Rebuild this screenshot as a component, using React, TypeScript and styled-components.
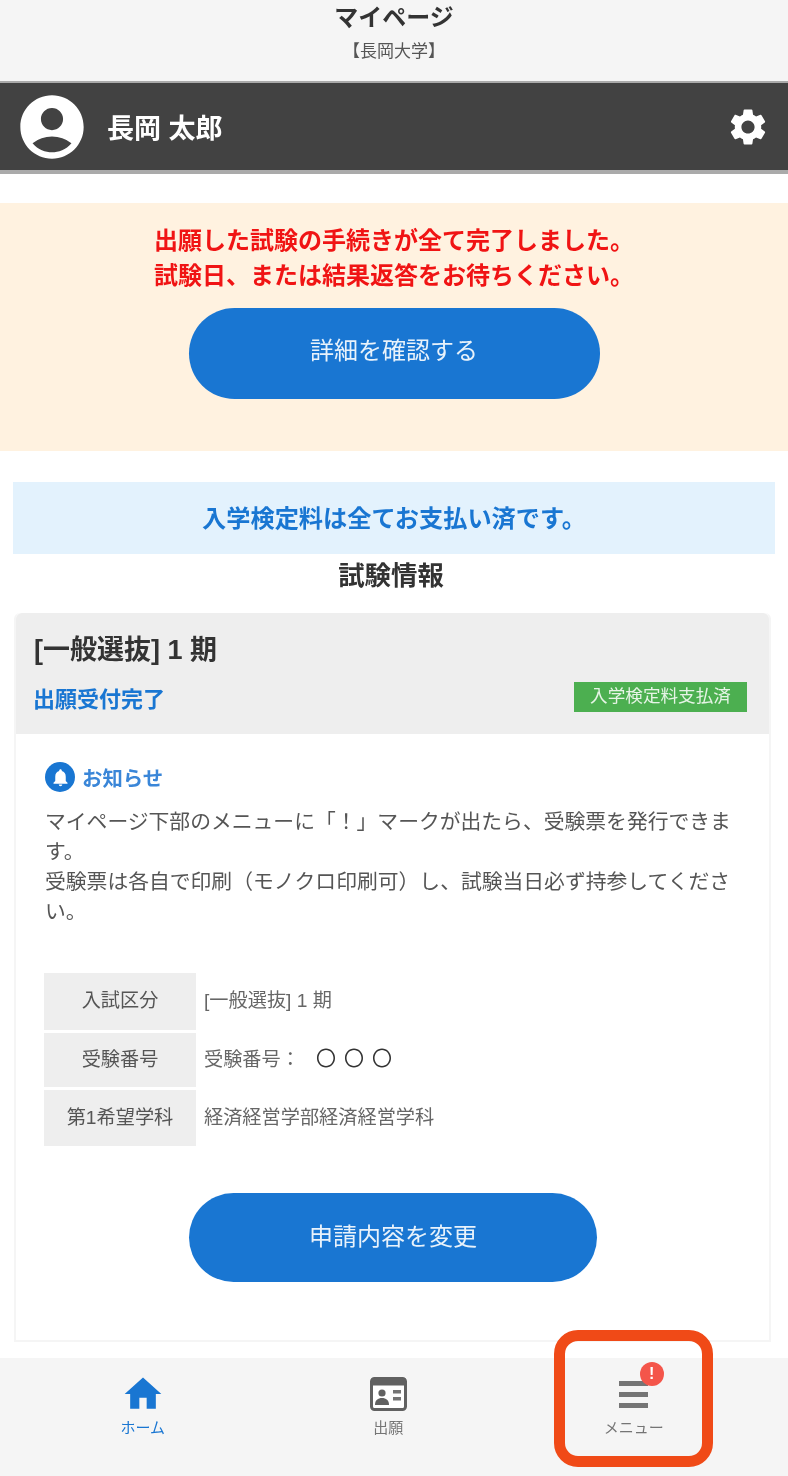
import React from "react";
import styled, { createGlobalStyle } from "styled-components";
import { MdAccountCircle, MdHome, MdNotifications, MdSettings } from "react-icons/md";

const Global = createGlobalStyle`
  html, body { margin: 0; padding: 0; background: #fff; }
  body {
    font-family: "Liberation Sans", "Noto Sans CJK JP", sans-serif;
    color: #424242;
  }
`;

const Page = styled.div`
  position: relative;
  width: 788px;
  height: 1476px;
  overflow: hidden;
  filter: blur(0.6px);
`;

const TopBar = styled.header`
  height: 81px;
  background: #f5f5f5;
  text-align: center;
`;

const Title = styled.div`
  padding-top: 2px;
  font-size: 24px;
  line-height: 32px;
  font-weight: 700;
  color: #333;
`;

const School = styled.div`
  margin-top: 7px;
  font-size: 17px;
  line-height: 22px;
  color: #555;
`;

const UserBar = styled.div`
  height: 87px;
  display: flex;
  align-items: center;
  justify-content: space-between;
  padding: 0 18px 0 20px;
  background: #424242;
  border-top: 2px solid #aaa;
  border-bottom: 4px solid #aaa;
  color: #fff;
`;

const UserInfo = styled.div`
  display: flex;
  align-items: center;
  gap: 20px;
  font-size: 27px;
  font-weight: 700;
`;

const Avatar = styled(MdAccountCircle)`
  margin: -6px;
`;

const UserName = styled.span`
  margin-left: 3px;
`;

const Notice = styled.section`
  margin-top: 29px;
  height: 248px;
  padding-top: 20px;
  box-sizing: border-box;
  background: #fff2e0;
  display: flex;
  flex-direction: column;
  align-items: center;
`;

const NoticeText = styled.p`
  margin: 0;
  font-size: 24px;
  line-height: 35px;
  font-weight: 700;
  color: #f01414;
  text-align: center;
`;

const PillButton = styled.button<{ $width: number; $height: number }>`
  display: block;
  width: ${($) => $.$width}px;
  height: ${($) => $.$height}px;
  padding: 0 0 6px;
  border: 0;
  border-radius: 46px;
  background: #1976d2;
  color: #e8f2fb;
  font: inherit;
  font-size: 24px;
`;

const NoticeButton = styled(PillButton)`
  margin-top: 15px;
  padding-bottom: 10px;
`;

const PaidBand = styled.div`
  margin: 31px 13px 0;
  height: 72px;
  padding-bottom: 4px;
  box-sizing: border-box;
  display: flex;
  align-items: center;
  justify-content: center;
  background: #e3f2fd;
  color: #1976d2;
  font-size: 24.2px;
  font-weight: 700;
`;

const SectionTitle = styled.h2`
  margin: 0;
  height: 59px;
  display: flex;
  justify-content: center;
  padding: 5px 6px 0 0;
  box-sizing: border-box;
  font-size: 26.4px;
  line-height: 34px;
  font-weight: 700;
  color: #333;
`;

const Card = styled.article`
  margin: 0 17px 0 14px;
  height: 729px;
  box-sizing: border-box;
  border: 2px solid #f5f5f5;
  border-top: 0;
  border-radius: 6px 6px 0 0;
`;

const CardHead = styled.div`
  height: 121px;
  box-sizing: border-box;
  padding: 19px 22px 0 18px;
  background: #eee;
  border-radius: 6px 6px 0 0;
`;

const CardTitle = styled.div`
  font-size: 27px;
  line-height: 36px;
  font-weight: 700;
  color: #333;
`;

const StatusRow = styled.div`
  margin-top: 14px;
  display: flex;
  align-items: flex-start;
  justify-content: space-between;
`;

const Status = styled.span`
  margin-left: -1px;
  font-size: 22px;
  line-height: 36px;
  font-weight: 700;
  color: #1976d2;
`;

const Badge = styled.span`
  width: 173px;
  height: 30px;
  line-height: 29px;
  text-align: center;
  background: #4caf50;
  color: #e6f4e6;
  font-size: 17.6px;
  white-space: nowrap;
`;

const CardBody = styled.div`
  padding: 28px 29px 0 28px;
`;

const InfoLabel = styled.div`
  display: flex;
  align-items: center;
  gap: 7px;
  height: 30px;
  margin-left: 1px;
  font-size: 20.4px;
  font-weight: 700;
  color: #3a86d8;
`;

const BellDot = styled.span`
  width: 30px;
  height: 30px;
  border-radius: 50%;
  background: #1976d2;
  color: #fff;
  display: flex;
  align-items: center;
  justify-content: center;
`;

const InfoText = styled.p`
  margin: 15px 0 0 1px;
  width: 700px;
  font-size: 20.8px;
  line-height: 30px;
  color: #555;
`;

const InfoTable = styled.div`
  margin-top: 46px;
  display: grid;
  grid-template-columns: 152px 1fr;
  row-gap: 3px;
`;

const Th = styled.div<{ $h: number }>`
  height: ${($) => $.$h}px;
  padding-bottom: 5px;
  box-sizing: border-box;
  display: flex;
  align-items: center;
  justify-content: center;
  background: #eee;
  font-size: 19.2px;
  color: #555;
`;

const Td = styled.div`
  display: flex;
  align-items: center;
  padding: 0 0 5px 8px;
  font-size: 19.2px;
  color: #666;
`;

const Circles = styled.span`
  margin-left: 16px;
  font-size: 20px;
  letter-spacing: 8px;
  color: #333;
`;

const ChangeButton = styled(PillButton)`
  margin: 47px 0 0 145px;
`;

const BottomNav = styled.nav`
  margin-top: 16px;
  height: 118px;
  display: grid;
  grid-template-columns: repeat(3, 245.5px);
  padding-left: 20px;
  background: #f5f5f5;
`;

const NavItem = styled.div<{ $active?: boolean }>`
  display: flex;
  flex-direction: column;
  align-items: center;
  padding-top: 14px;
  font-size: 15px;
  line-height: 20px;
  color: ${($) => ($.$active ? "#1976d2" : "#757575")};
`;

const NavIcon = styled.span`
  position: relative;
  width: 44px;
  height: 44px;
  display: flex;
  align-items: center;
  justify-content: center;
  margin-bottom: 2px;
`;

const Alert = styled.span`
  position: absolute;
  top: -10px;
  right: -8px;
  width: 24px;
  height: 24px;
  border-radius: 50%;
  background: #f4554a;
  color: #fff;
  font-size: 16px;
  font-weight: 700;
  line-height: 24px;
  text-align: center;
`;

const Highlight = styled.div`
  position: absolute;
  left: 554px;
  top: 1330px;
  width: 159px;
  height: 137px;
  box-sizing: border-box;
  border: 11px solid #f04a17;
  border-radius: 24px;
`;

function ApplyIcon() {
  return (
    <svg width="37" height="34" viewBox="0 0 37 34">
      <rect x="1.5" y="1.5" width="34" height="31" rx="3" fill="#fff" stroke="#616161" strokeWidth="3" />
      <rect x="1.5" y="1.5" width="34" height="7" fill="#616161" />
      <circle cx="12" cy="16" r="3.6" fill="#616161" />
      <path d="M5 28c0-5 3-7 7-7s7 2 7 7z" fill="#616161" />
      <rect x="23" y="13" width="8" height="3.5" fill="#757575" />
      <rect x="23" y="20" width="8" height="3.5" fill="#757575" />
    </svg>
  );
}

function MenuIcon() {
  return (
    <svg width="29" height="28" viewBox="0 0 29 28">
      <rect x="0" y="1" width="29" height="5" fill="#757575" />
      <rect x="0" y="12" width="29" height="5" fill="#757575" />
      <rect x="0" y="23" width="29" height="5" fill="#757575" />
    </svg>
  );
}

export default function App() {
  return (
    <Page>
      <Global />
      <TopBar>
        <Title>マイページ</Title>
        <School>【長岡大学】</School>
      </TopBar>

      <UserBar>
        <UserInfo>
          <Avatar size={76} />
          <UserName>長岡 太郎</UserName>
        </UserInfo>
        <MdSettings size={44} />
      </UserBar>

      <Notice>
        <NoticeText>
          出願した試験の手続きが全て完了しました。
          <br />
          試験日、または結果返答をお待ちください。
        </NoticeText>
        <NoticeButton $width={411} $height={91}>詳細を確認する</NoticeButton>
      </Notice>

      <PaidBand>入学検定料は全てお支払い済です。</PaidBand>
      <SectionTitle>試験情報</SectionTitle>

      <Card>
        <CardHead>
          <CardTitle>[一般選抜] 1 期</CardTitle>
          <StatusRow>
            <Status>出願受付完了</Status>
            <Badge>入学検定料支払済</Badge>
          </StatusRow>
        </CardHead>
        <CardBody>
          <InfoLabel>
            <BellDot>
              <MdNotifications size={21} />
            </BellDot>
            お知らせ
          </InfoLabel>
          <InfoText>
            マイページ下部のメニューに「！」マークが出たら、受験票を発行できます。
            <br />
            受験票は各自で印刷（モノクロ印刷可）し、試験当日必ず持参してください。
          </InfoText>
          <InfoTable>
            <Th $h={57}>入試区分</Th>
            <Td>[一般選抜] 1 期</Td>
            <Th $h={54}>受験番号</Th>
            <Td>
              受験番号：<Circles>〇〇〇</Circles>
            </Td>
            <Th $h={56}>第1希望学科</Th>
            <Td>経済経営学部経済経営学科</Td>
          </InfoTable>
          <ChangeButton $width={408} $height={89}>申請内容を変更</ChangeButton>
        </CardBody>
      </Card>

      <BottomNav>
        <NavItem $active>
          <NavIcon>
            <MdHome size={46} />
          </NavIcon>
          ホーム
        </NavItem>
        <NavItem>
          <NavIcon>
            <ApplyIcon />
          </NavIcon>
          出願
        </NavItem>
        <NavItem>
          <NavIcon>
            <MenuIcon />
            <Alert>!</Alert>
          </NavIcon>
          メニュー
        </NavItem>
      </BottomNav>

      <Highlight />
    </Page>
  );
}
